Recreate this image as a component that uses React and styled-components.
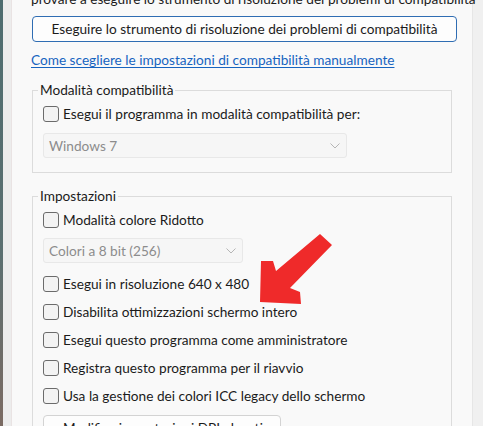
import styled, { createGlobalStyle } from "styled-components"

const Global = createGlobalStyle`
    html, body {
        margin: 0;
        padding: 0;
        overflow: hidden;
        background: #f0f0f0;
    }
    body {
        font-family: Lato, "Liberation Sans", sans-serif;
    }
`

const Frame = styled.div`
    display: flex;
    width: 483px;
    height: 426px;
    overflow: hidden;
`

const Desktop = styled.div`
    width: 3px;
    background: linear-gradient(#4d6c6f, #5b6f70 60%, #7a6a62);
`

const Gutter = styled.div`
    width: 8px;
    background: #ececec;
    border-right: 1px solid #e9e3e3;
`

const Panel = styled.div`
    width: 461px;
    background: #f9f9f9;
    border-right: 1px solid #e6e6e6;
    padding: 0 0 0 19px;
    box-sizing: border-box;
    color: #1b1b1b;
    font-size: 13.65px;
`

const Intro = styled.div`
    margin-top: -11px;
    height: 20px;
    line-height: 20px;
    white-space: nowrap;
`

const Button = styled.div`
    box-sizing: border-box;
    width: ${p => p.$w}px;
    height: 26px;
    margin-left: ${p => p.$ml || 0}px;
    margin-top: ${p => p.$mt || 0}px;
    border: 1px solid ${p => p.$accent ? "#2f6db3" : "#d3d3d3"};
    border-radius: 4px;
    background: #fdfdfd;
    display: flex;
    align-items: center;
    justify-content: ${p => p.$accent ? "center" : "flex-start"};
    padding-left: ${p => p.$accent ? 0 : 19}px;
    white-space: nowrap;
`

const Link = styled.div`
    margin-top: 8px;
    height: 20px;
    line-height: 20px;
    color: #1764c0;
    text-decoration: underline;
    text-decoration-thickness: 1px;
    text-underline-offset: 2px;
    white-space: nowrap;
`

const Group = styled.fieldset`
    margin: ${p => p.$mt}px 0 0 1px;
    width: 420px;
    box-sizing: border-box;
    border: 1px solid #dcdcdc;
    border-radius: 0;
    padding: 5px 0 ${p => p.$pb}px 10px;
    min-width: 0;
    display: flex;
    flex-direction: column;
`

const Legend = styled.legend`
    padding: 0 2px;
    margin-left: -5px;
    line-height: 18px;
    height: 18px;
`

const Row = styled.div`
    display: flex;
    align-items: center;
    height: 20px;
    gap: 4px;
    margin-top: ${p => p.$mt || 0}px;
    white-space: nowrap;
`

const Box = styled.span`
    width: 16px;
    height: 16px;
    box-sizing: border-box;
    border: 1px solid #6b6b6b;
    border-radius: 3px;
    background: #f3f3f3;
    flex: none;
`

const Select = styled.div`
    box-sizing: border-box;
    width: ${p => p.$w}px;
    height: 25px;
    margin-top: ${p => p.$mt}px;
    border: 1px solid #e8e8e8;
    border-radius: 3px;
    background: #f6f6f6;
    color: #8c8c8c;
    display: flex;
    align-items: center;
    justify-content: space-between;
    padding: 0 6px 0 5px;
`

const Arrow = styled.svg`
    position: absolute;
    left: 0;
    top: 0;
    pointer-events: none;
`

function Check({ label, mt }) {
    return (
        <Row $mt={mt}>
            <Box />
            <span>{label}</span>
        </Row>
    )
}

function Chevron() {
    return (
        <svg width="10" height="6" viewBox="0 0 10 6">
            <path d="M0.5 0.5 L5 5 L9.5 0.5" fill="none" stroke="#b5b5b5" strokeWidth="1" />
        </svg>
    )
}

export default function App() {
    return (
        <>
            <Global />
            <Frame>
                <Desktop />
                <Gutter />
                <Panel>
                    <Intro>provare a eseguire lo strumento di risoluzione dei problemi di compatibilità</Intro>
                    <Button $accent $w={425} $ml={1} $mt={7}>
                        Eseguire lo strumento di risoluzione dei problemi di compatibilità
                    </Button>
                    <Link>Come scegliere le impostazioni di compatibilità manualmente</Link>
                    <Group $mt={11} $pb={14}>
                        <Legend>Modalità compatibilità</Legend>
                        <Check label="Esegui il programma in modalità compatibilità per:" />
                        <Select $w={304} $mt={9}>
                            <span>Windows 7</span>
                            <Chevron />
                        </Select>
                    </Group>
                    <Group $mt={14} $pb={0}>
                        <Legend>Impostazioni</Legend>
                        <Check label="Modalità colore Ridotto" />
                        <Select $w={200} $mt={8}>
                            <span>Colori a 8 bit (256)</span>
                            <Chevron />
                        </Select>
                        <Check mt={11} label="Esegui in risoluzione 640 x 480" />
                        <Check mt={8} label="Disabilita ottimizzazioni schermo intero" />
                        <Check mt={8} label="Esegui questo programma come amministratore" />
                        <Check mt={8} label="Registra questo programma per il riavvio" />
                        <Check mt={8} label="Usa la gestione dei colori ICC legacy dello schermo" />
                        <Button $w={238} $mt={9}>Modifica impostazioni DPI elevati</Button>
                        <div style={{ height: 20 }} />
                    </Group>
                </Panel>
                <Arrow width="483" height="426">
                    <polygon
                        points="320,234 332,245 290,288 300,292 301,304 260,302 261,261 273,261 276,271"
                        fill="#ef2a2a"
                    />
                </Arrow>
            </Frame>
        </>
    )
}
